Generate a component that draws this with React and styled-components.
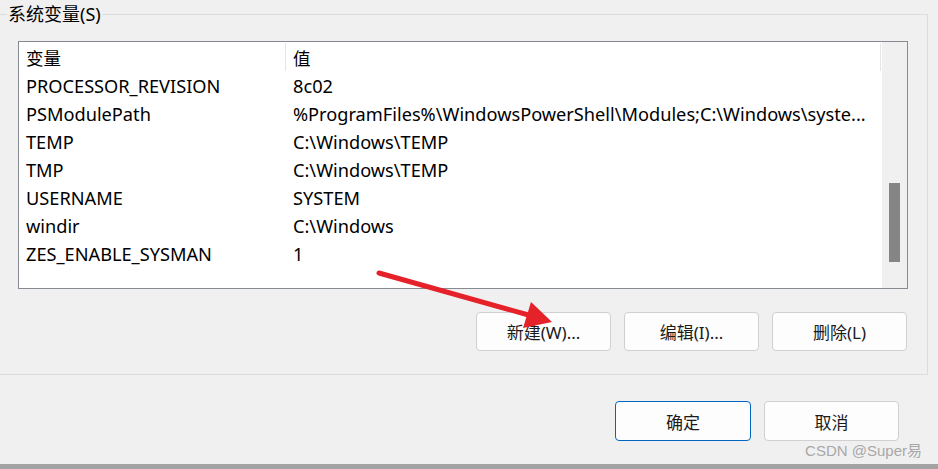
import React from "react";
import styled, { createGlobalStyle } from "styled-components";

const Global = createGlobalStyle`
    html, body {
        margin: 0;
        padding: 0;
        background: #f0f0f0;
    }
    body {
        font-family: "Noto Sans", "Noto Sans CJK SC", sans-serif;
        color: #000;
    }
`;

const Root = styled.div`
    position: relative;
    width: 938px;
    height: 469px;
    overflow: hidden;
    background: #f0f0f0;
    display: flex;
    flex-direction: column;
`;

const Group = styled.fieldset`
    margin: 4px 10px 0 -2px;
    padding: 17px 19px 23px 19px;
    border: 1px solid #dcdcdc;
    min-width: 0;
`;

const Caption = styled.legend`
    margin-left: -11px;
    padding: 0 1px;
    font-size: 18px;
    line-height: 20px;
    color: #000;
`;

const ListBox = styled.div`
    display: flex;
    height: 246px;
    border: 1px solid #868a91;
    background: #fff;
`;

const Table = styled.div`
    flex: 1;
    min-width: 0;
    display: flex;
    flex-direction: column;
`;

const HeaderRow = styled.div`
    display: flex;
    height: 30px;
    align-items: stretch;
`;

const HeaderCell = styled.div`
    width: ${(p) => p.$w}px;
    flex: ${(p) => (p.$w ? "none" : "1")};
    display: flex;
    align-items: center;
    padding: 0 0 0 7px;
    box-sizing: border-box;
    font-size: 17.5px;
    border-right: 1px solid #e5e5e5;
    margin: 1px 0 1px 0;
`;

const Spacer = styled.div`
    width: 1px;
`;

const Row = styled.div`
    display: flex;
    height: 28px;
    align-items: center;
    font-size: 18.2px;
    white-space: nowrap;
`;

const Cell = styled.div`
    width: ${(p) => p.$w}px;
    flex: ${(p) => (p.$w ? "none" : "1")};
    padding-left: 7px;
    box-sizing: border-box;
    overflow: hidden;
`;

const Track = styled.div`
    width: 25px;
    background: #f0f0f0;
`;

const Thumb = styled.div`
    width: 11px;
    height: 79px;
    margin: 141px 0 0 7px;
    background: #858585;
`;

const GroupButtons = styled.div`
    display: flex;
    justify-content: flex-end;
    gap: 13px;
    margin-top: 23px;
    padding-right: 1px;
`;

const Button = styled.button`
    width: ${(p) => p.$w || 135}px;
    height: ${(p) => p.$h || 39}px;
    box-sizing: border-box;
    background: #fdfdfd;
    border: 1px solid ${(p) => (p.$primary ? "#0067c0" : "#d0d0d0")};
    border-radius: 4px;
    font-family: "Noto Sans", "Noto Sans CJK SC", sans-serif;
    font-size: 17px;
    color: #1b1b1b;
    padding: 0;
    cursor: default;
`;

const DialogButtons = styled.div`
    display: flex;
    justify-content: flex-end;
    gap: 13px;
    margin-top: 26px;
    padding-right: 39px;
`;

const BottomEdge = styled.div`
    margin-top: auto;
    height: 5px;
    background: #a3a3a3;
`;

const Watermark = styled.div`
    position: absolute;
    right: 16px;
    bottom: 9px;
    font-family: "Liberation Sans", "Noto Sans CJK SC", sans-serif;
    font-size: 15px;
    color: #a8a8a8;
`;

const Overlay = styled.svg`
    position: absolute;
    left: 0;
    top: 0;
    pointer-events: none;
`;

const rows = [
    ["PROCESSOR_REVISION", "8c02"],
    ["PSModulePath", "%ProgramFiles%\\WindowsPowerShell\\Modules;C:\\Windows\\syste..."],
    ["TEMP", "C:\\Windows\\TEMP"],
    ["TMP", "C:\\Windows\\TEMP"],
    ["USERNAME", "SYSTEM"],
    ["windir", "C:\\Windows"],
    ["ZES_ENABLE_SYSMAN", "1"],
];

const Arrow = () => (
    <Overlay width="938" height="469" viewBox="0 0 938 469">
        <line x1="379" y1="273" x2="532" y2="316" stroke="#e52229" strokeWidth="5" strokeLinecap="round" />
        <polygon points="531,302 552,322 523,328" fill="#e52229" />
    </Overlay>
);

const App = () => {
    return (
        <Root>
            <Global />
            <Group>
                <Caption>系统变量(S)</Caption>
                <ListBox>
                    <Table>
                        <HeaderRow>
                            <HeaderCell $w={267}>变量</HeaderCell>
                            <HeaderCell>值</HeaderCell>
                            <Spacer />
                        </HeaderRow>
                        {rows.map(([k, v]) => (
                            <Row key={k}>
                                <Cell $w={267}>{k}</Cell>
                                <Cell>{v}</Cell>
                            </Row>
                        ))}
                    </Table>
                    <Track>
                        <Thumb />
                    </Track>
                </ListBox>
                <GroupButtons>
                    <Button>新建(W)...</Button>
                    <Button>编辑(I)...</Button>
                    <Button>删除(L)</Button>
                </GroupButtons>
            </Group>
            <DialogButtons>
                <Button $primary $w={136} $h={40}>确定</Button>
                <Button $h={40}>取消</Button>
            </DialogButtons>
            <BottomEdge />
            <Watermark>CSDN @Super易</Watermark>
            <Arrow />
        </Root>
    );
};

export default App;
